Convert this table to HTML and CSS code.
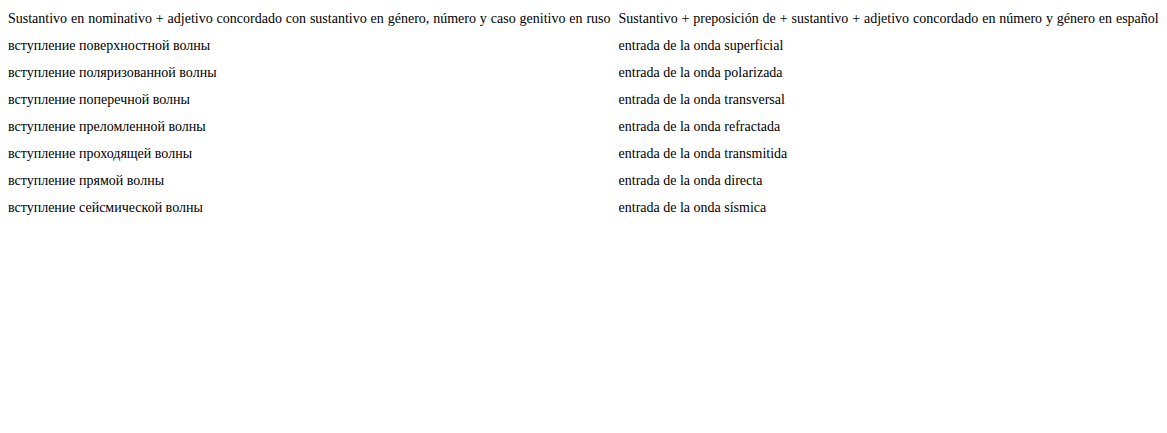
FILE: index.html
```html
<!DOCTYPE html>
<html>
<head>
<meta charset="utf-8">
<link rel="stylesheet" href="styles.css">
</head>
<body>
<table class="terms">
<tr class="head"><td>Sustantivo en nominativo + adjetivo concordado con sustantivo en género, número y caso genitivo en ruso</td><td>Sustantivo + preposición de + sustantivo + adjetivo concordado en número y género en español</td></tr>
<tr><td>вступление поверхностной волны</td><td>entrada de la onda superficial</td></tr>
<tr><td>вступление поляризованной волны</td><td>entrada de la onda polarizada</td></tr>
<tr><td>вступление поперечной волны</td><td>entrada de la onda transversal</td></tr>
<tr><td>вступление преломленной волны</td><td>entrada de la onda refractada</td></tr>
<tr><td>вступление проходящей волны</td><td>entrada de la onda transmitida</td></tr>
<tr><td>вступление прямой волны</td><td>entrada de la onda directa</td></tr>
<tr><td>вступление сейсмической волны</td><td>entrada de la onda sísmica</td></tr>
</table>
</body>
</html>
```
FILE: styles.css
```css
body {
  margin: 8px;
  font-family: "Liberation Serif", "Times New Roman", serif;
  font-size: 14px;
  color: #000;
  background: #fff;
}
.terms {
  border-collapse: collapse;
  white-space: nowrap;
}
.terms td {
  padding: 3px 8px 8px 0;
  line-height: 16px;
  vertical-align: top;
}
.terms .head td {
  word-spacing: 0.4px;
}
```
